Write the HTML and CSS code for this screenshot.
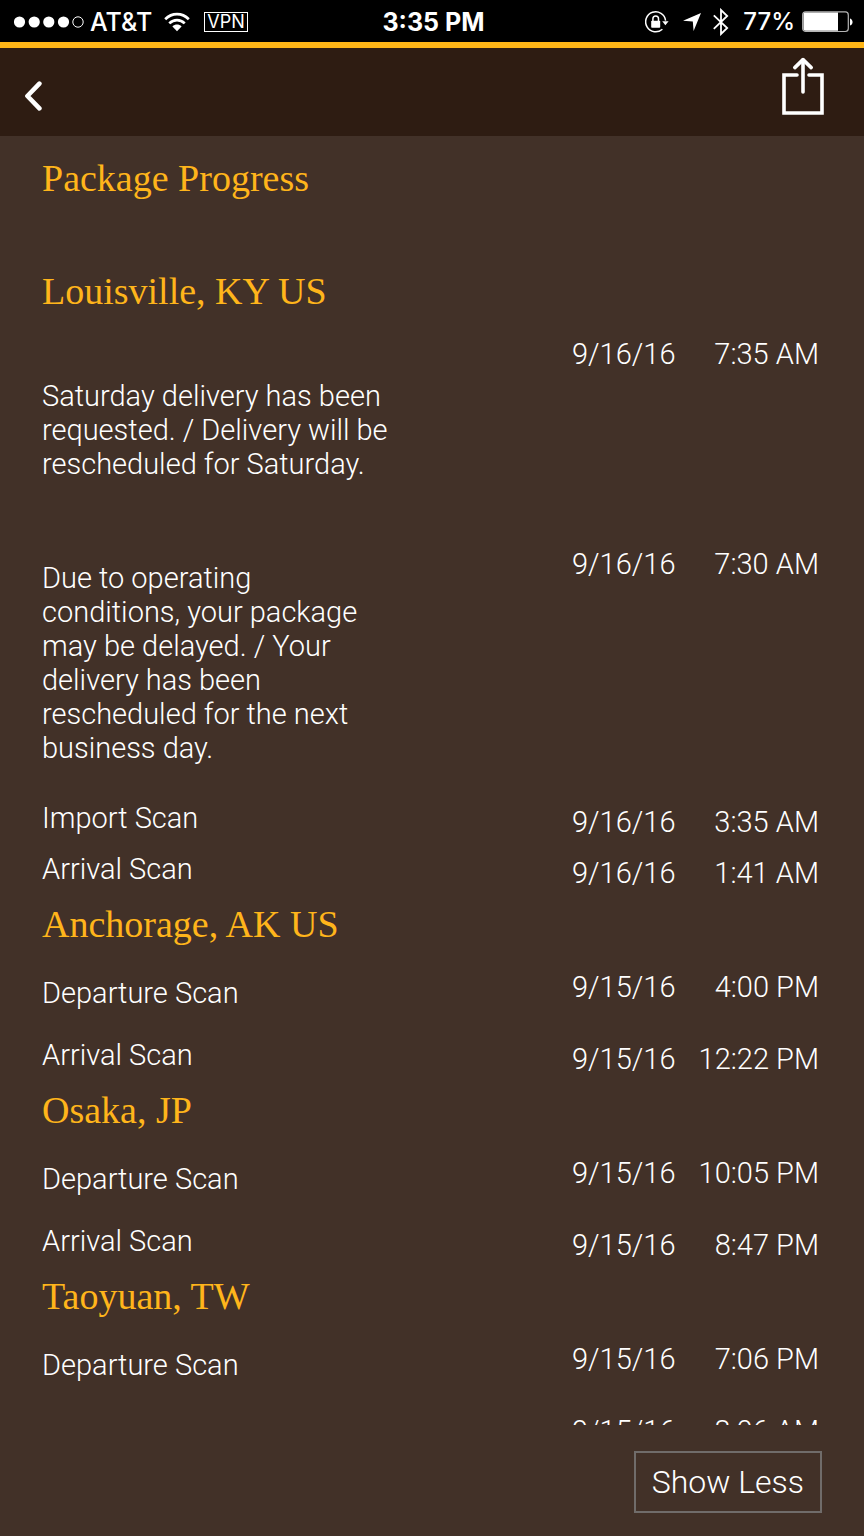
FILE: index.html
```html
<!DOCTYPE html>
<html lang="en">
<head>
  <meta charset="UTF-8">
  <meta name="viewport" content="width=device-width, initial-scale=1.0">
  <title>Package Progress</title>
  <link rel="stylesheet" href="styles.css">
</head>
<body>

  <!-- Status bar -->
  <div class="status-bar">
    <div class="status-left">
      <svg class="signal" width="70" height="14" viewBox="0 0 70 14" aria-hidden="true">
        <g fill="#fff">
          <circle cx="5.5" cy="7" r="5.6"/>
          <circle cx="20.2" cy="7" r="5.6"/>
          <circle cx="34.8" cy="7" r="5.6"/>
          <circle cx="49.5" cy="7" r="5.6"/>
        </g>
        <circle cx="64" cy="7" r="5.2" fill="none" stroke="#fff" stroke-width="1"/>
      </svg>
      <span class="carrier">AT&amp;T</span>
      <svg class="wifi" width="26" height="20" viewBox="0 0 26 20" aria-hidden="true">
        <g fill="none" stroke="#fff" stroke-width="2.7">
          <path d="M1.2 7.2C8 .4 18 .4 24.8 7.2"/>
          <path d="M5.3 11.4C9.8 7 16.2 7 20.7 11.4"/>
        </g>
        <path d="M8.4 14.4c2.7-2.6 6.5-2.6 9.2 0L13 19.2z" fill="#fff"/>
      </svg>
      <span class="vpn">VPN</span>
    </div>
    <span class="clock">3:35 PM</span>
    <div class="status-right">
      <svg class="lock" width="24" height="22" viewBox="0 0 24 22" aria-hidden="true">
        <path d="M17.4 18.2A10 10 0 1 1 20.6 9.6" fill="none" stroke="#fff" stroke-width="1.5"/>
        <path d="M17.2 10.2h6.4l-3.2 4z" fill="#fff"/>
        <rect x="6.2" y="9.8" width="9" height="7" rx=".8" fill="#fff"/>
        <path d="M7.9 10V7.8a2.8 2.8 0 0 1 5.6 0V10" fill="none" stroke="#fff" stroke-width="1.5"/>
      </svg>
      <svg class="location" width="18" height="18" viewBox="0 0 18 18" aria-hidden="true">
        <path d="M18 0L10.6 18 9.8 8.6 0 7.8z" fill="#fff"/>
      </svg>
      <svg class="bluetooth" width="16" height="28" viewBox="0 0 16 28" aria-hidden="true">
        <path d="M.8 7.4L14.2 20 8 26V2l6.2 6L.8 20.8" fill="none" stroke="#fff" stroke-width="1.8"/>
      </svg>
      <span class="percent">77%</span>
      <svg class="battery" width="51" height="22" viewBox="0 0 51 22" aria-hidden="true">
        <rect x=".7" y=".9" width="45.6" height="19.6" rx="3" fill="none" stroke="#b5b5b5" stroke-width="1.2"/>
        <path d="M3.5 1.6H36v18.2H3.5a2 2 0 0 1-2-2V3.6a2 2 0 0 1 2-2z" fill="#fff"/>
        <path d="M48 7.4c3.4 1 3.4 6.2 0 7.2z" fill="#fff"/>
      </svg>
    </div>
  </div>

  <!-- Navigation -->
  <header class="nav-bar">
    <button class="icon-btn back-btn" type="button" aria-label="Back">
      <svg width="18" height="30" viewBox="0 0 18 30">
        <path d="M15.4 2.6L3.4 15l12 12.4" fill="none" stroke="#fff" stroke-width="4.6" stroke-linecap="round" stroke-linejoin="round"/>
      </svg>
    </button>
    <button class="icon-btn share-btn" type="button" aria-label="Share">
      <svg width="42" height="58" viewBox="0 0 42 58">
        <g fill="none" stroke="#fff" stroke-width="3.6" stroke-linecap="round">
          <path d="M15 18H2v38h38V18H27"/>
          <path d="M21 3v32"/>
          <path d="M12.8 10.6L21 2.6l8.2 8" stroke-linejoin="round"/>
        </g>
      </svg>
    </button>
  </header>

  <!-- Scan history -->
  <main class="progress">
    <h1 class="heading page-title">Package Progress</h1>

    <section class="stop">
      <h2 class="heading">Louisville, KY US</h2>
      <div class="event notice notice-first">
        <p class="event-text">Saturday delivery has been requested. / Delivery will be rescheduled for Saturday.</p>
        <div class="event-time"><span>9/16/16</span><span>7:35 AM</span></div>
      </div>
      <div class="event notice">
        <p class="event-text">Due to operating conditions, your package may be delayed. / Your delivery has been rescheduled for the next business day.</p>
        <div class="event-time"><span>9/16/16</span><span>7:30 AM</span></div>
      </div>
      <div class="event">
        <p class="event-text">Import Scan</p>
        <div class="event-time"><span>9/16/16</span><span>3:35 AM</span></div>
      </div>
      <div class="event">
        <p class="event-text">Arrival Scan</p>
        <div class="event-time"><span>9/16/16</span><span>1:41 AM</span></div>
      </div>
    </section>

    <section class="stop">
      <h2 class="heading">Anchorage, AK US</h2>
      <div class="event departure">
        <p class="event-text">Departure Scan</p>
        <div class="event-time"><span>9/15/16</span><span>4:00 PM</span></div>
      </div>
      <div class="event">
        <p class="event-text">Arrival Scan</p>
        <div class="event-time"><span>9/15/16</span><span>12:22 PM</span></div>
      </div>
    </section>

    <section class="stop">
      <h2 class="heading">Osaka, JP</h2>
      <div class="event departure">
        <p class="event-text">Departure Scan</p>
        <div class="event-time"><span>9/15/16</span><span>10:05 PM</span></div>
      </div>
      <div class="event">
        <p class="event-text">Arrival Scan</p>
        <div class="event-time"><span>9/15/16</span><span>8:47 PM</span></div>
      </div>
    </section>

    <section class="stop">
      <h2 class="heading">Taoyuan, TW</h2>
      <div class="event departure">
        <p class="event-text">Departure Scan</p>
        <div class="event-time"><span>9/15/16</span><span>7:06 PM</span></div>
      </div>
      <div class="event">
        <p class="event-text"></p>
        <div class="event-time"><span>9/15/16</span><span>8:06 AM</span></div>
      </div>
    </section>
  </main>

  <footer class="footer">
    <button class="toggle-btn" type="button">Show Less</button>
  </footer>

</body>
</html>
```
FILE: styles.css
```css
* {
  box-sizing: border-box;
}

body {
  display: flex;
  flex-direction: column;
  height: 100vh;
  margin: 0;
  background-color: #423128;
  color: #fff;
  font-family: Roboto, "Liberation Sans", sans-serif;
  font-size: 29px;
  font-weight: 300;
  line-height: 34px;
}

/* Status bar */
.status-bar {
  display: grid;
  grid-template-columns: 1fr auto 1fr;
  align-items: center;
  height: 42px;
  padding: 1px 11px 0 14px;
  background-color: #000;
  font-family: Inter, "Liberation Sans", sans-serif;
  font-size: 25px;
  font-weight: 500;
}

.status-left,
.status-right {
  display: flex;
  align-items: center;
}

.status-right {
  justify-content: flex-end;
}

.carrier {
  margin-left: 6px;
}

.wifi {
  margin-left: 12px;
}

.vpn {
  margin-left: 14px;
  padding: 0 2px;
  border: 1px solid #fff;
  font-size: 18px;
  font-weight: 400;
  line-height: 18px;
}

.clock {
  font-weight: 700;
}

.location {
  margin-left: 14px;
}

.bluetooth {
  margin-left: 12px;
}

.percent {
  margin-left: 14px;
  font-size: 24px;
}

.battery {
  margin-left: 7px;
}

/* Navigation */
.nav-bar {
  display: flex;
  align-items: center;
  justify-content: space-between;
  height: 94px;
  padding: 0 40px 0 24px;
  border-top: 6px solid #ffb516;
  background-color: #2e1c12;
}

.icon-btn {
  padding: 0;
  border: none;
  background: none;
  cursor: pointer;
}

.icon-btn svg {
  display: block;
}

.back-btn {
  margin-top: 8px;
}

.share-btn {
  margin-bottom: 12px;
}

/* Scan history */
.progress {
  flex: 1;
  min-height: 0;
  overflow: hidden;
  padding: 18px 45px 0 42px;
}

.heading {
  margin: 0 0 22px;
  color: #ffb51b;
  font-family: "Liberation Serif", serif;
  font-size: 38px;
  font-weight: 400;
  line-height: 48px;
}

.page-title {
  margin-bottom: 65px;
}

.stop {
  margin-bottom: 10px;
}

.event {
  display: grid;
  grid-template-columns: 1fr 247px;
  align-items: start;
  margin-bottom: 13px;
}

.event:last-child {
  margin-bottom: 0;
}

.event-text {
  max-width: 350px;
  margin: 0;
}

.event-time {
  display: flex;
  justify-content: space-between;
  padding-top: 4px;
}

.departure {
  margin-bottom: 28px;
}

.departure .event-text {
  padding-top: 6px;
}

.notice {
  margin-bottom: 36px;
}

.notice .event-text {
  padding-top: 14px;
}

.notice-first {
  margin-bottom: 66px;
}

.notice-first .event-text {
  padding-top: 42px;
}

.departure .event-time,
.notice .event-time {
  padding-top: 0;
}

/* Footer */
.footer {
  display: flex;
  justify-content: flex-end;
  padding: 26px 42px 23px;
}

.toggle-btn {
  padding: 12px 16px;
  border: 2px solid #706c6a;
  background: none;
  color: #fff;
  font: inherit;
  font-size: 32px;
  cursor: pointer;
}
```
